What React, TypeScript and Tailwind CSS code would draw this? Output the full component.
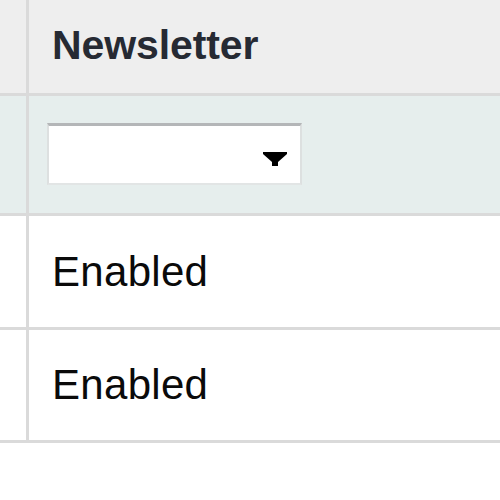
import React from "react";

export default function App() {
  return (
    <div className="w-[500px] h-[500px] overflow-hidden bg-white" style={{ fontFamily: '"Liberation Sans", Arial, sans-serif' }}>
      <div className="w-[560px]">
        {/* header */}
        <div className="flex h-[96px] bg-[#eeeeee] border-b-[3px] border-[#dadada]">
          <div className="w-[29px] shrink-0 border-r-[3px] border-[#dadada]" />
          <div className="flex-1 flex items-center pl-[23px] pb-[2px]">
            <span className="text-[41px] font-bold text-[#262a33] leading-none tracking-[-0.1px]">Newsletter</span>
          </div>
        </div>
        {/* filter row */}
        <div className="flex h-[120px] bg-[#e6eeed] border-b-[3px] border-[#dadada]">
          <div className="w-[29px] shrink-0 border-r-[3px] border-[#dadada]" />
          <div className="flex-1 flex items-start pl-[18px] pt-[27px]">
            <div className="relative w-[255px] h-[62px] bg-white border-t-[3px] border-t-[#b4b6b8] border-x-[2px] border-b-[2px] border-x-[#dde0e0] border-b-[#e2e5e5]">
              <svg className="absolute left-[214px] top-[26px]" width="24" height="14" viewBox="0 0 24 14">
                <polygon points="0,0 24,0 24,2 15,10 15,14 9,14 9,10 0,2" fill="#000" />
              </svg>
            </div>
          </div>
        </div>
        {/* row 1 */}
        <div className="flex h-[114px] bg-white border-b-[3px] border-[#dadada]">
          <div className="w-[29px] shrink-0 border-r-[3px] border-[#dadada]" />
          <div className="flex-1 flex items-center pl-[23px]">
            <span className="text-[42px] text-[#0a0a0a] leading-none tracking-[0.3px]">Enabled</span>
          </div>
        </div>
        {/* row 2 */}
        <div className="flex h-[113px] bg-white border-b-[3px] border-[#dadada]">
          <div className="w-[29px] shrink-0 border-r-[3px] border-[#dadada]" />
          <div className="flex-1 flex items-center pl-[23px]">
            <span className="text-[42px] text-[#0a0a0a] leading-none tracking-[0.3px]">Enabled</span>
          </div>
        </div>
      </div>
    </div>
  );
}
